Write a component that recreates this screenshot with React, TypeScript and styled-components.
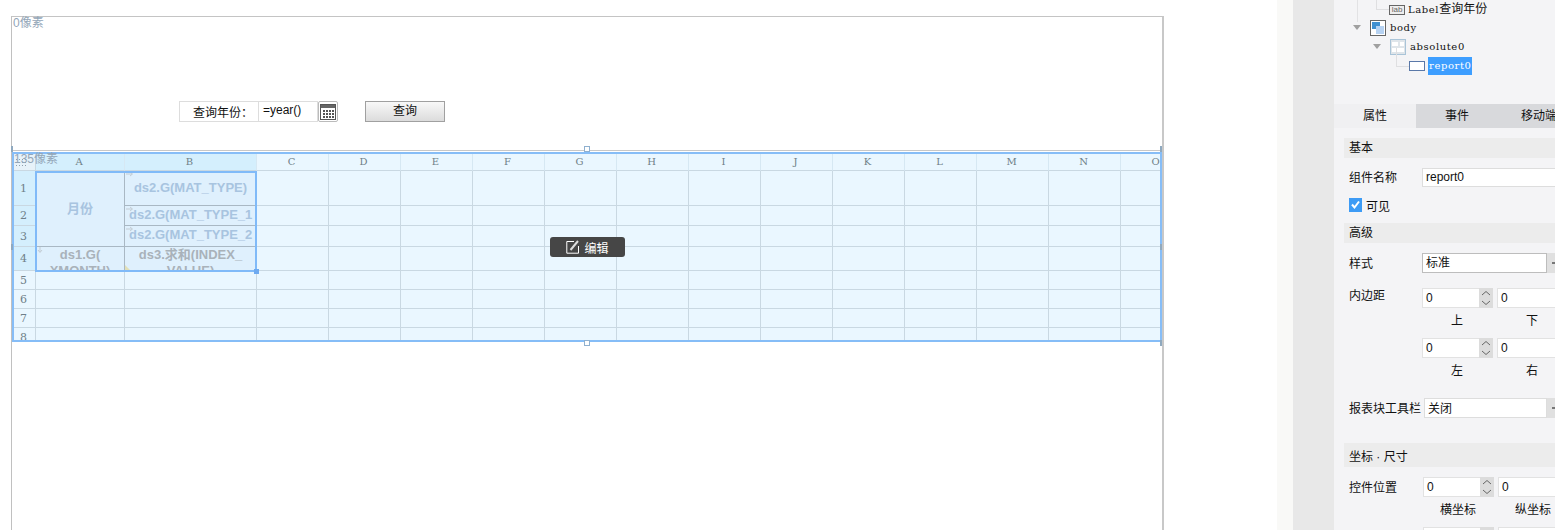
import React from "react";
import styled, { createGlobalStyle } from "styled-components";

const columns = ["C", "D", "E", "F", "G", "H", "I", "J", "K", "L", "M", "N", "O"];

function CalendarIcon() {
  return (
    <svg width="16" height="16" viewBox="0 0 16 16">
      <rect x="0.5" y="0.5" width="15" height="15" fill="#fff" stroke="#555" />
      <rect x="1" y="1" width="14" height="3" fill="#666" />
      {[6, 9, 12].map((y) =>
        [3, 6, 9, 12].map((x) => <rect key={`${x}-${y}`} x={x} y={y} width="2" height="2" fill="#555" />)
      )}
    </svg>
  );
}

function EditIcon() {
  return (
    <svg width="14" height="14" viewBox="0 0 14 14">
      <path d="M8 1.5H.8v11.7h11.7V6" fill="none" stroke="#fff" />
      <path d="M4.5 10 12 1" fill="none" stroke="#ddd" strokeWidth="2" />
    </svg>
  );
}

function Check() {
  return (
    <svg width="13" height="13" viewBox="0 0 13 13">
      <path d="M3 6.5 5.5 9.5 10 3.5" fill="none" stroke="#fff" strokeWidth="2" />
    </svg>
  );
}

function Marker({ down }: { down?: boolean }) {
  return (
    <MarkerBox width="8" height="6" viewBox="0 0 8 6">
      <path
        d={down ? "M3 0V5M1 3 3 5.5 5 3" : "M0 3H6M4 1 6.5 3 4 5"}
        fill="none"
        stroke="#c3ccd4"
      />
    </MarkerBox>
  );
}

function Spin({ value }: { value: string }) {
  return (
    <SpinField>
      <SpinValue>{value}</SpinValue>
      <SpinButtons>
        <svg width="10" height="16" viewBox="0 0 10 16">
          <path d="M1 5 5 1.5 9 5M1 11 5 14.5 9 11" fill="none" stroke="#666" />
        </svg>
      </SpinButtons>
    </SpinField>
  );
}

function Plain({ value }: { value: string }) {
  return <PlainField>{value}</PlainField>;
}

function Pad({ left, right, a, b }: { left: string; right: string; a: React.ReactNode; b: React.ReactNode }) {
  return (
    <>
      <FieldPair>
        {a}
        {b}
      </FieldPair>
      <CaptionPair>
        <span>{left}</span>
        <span>{right}</span>
      </CaptionPair>
    </>
  );
}

function Tree() {
  return (
    <TreeBox>
      <TreeRow $indent={55} $line $guide>
        <LabIcon>lab</LabIcon>
        <TreeText $tight>
          Label<TreeCjk>查询年份</TreeCjk>
        </TreeText>
      </TreeRow>
      <TreeRow $indent={19}>
        <Arrow />
        <svg width="16" height="16" viewBox="0 0 16 16">
          <rect x="0.5" y="0.5" width="15" height="15" fill="#fff" stroke="#666" />
          <rect x="2" y="2" width="8" height="7" fill="#3f8fd0" />
          <rect x="6" y="6" width="8" height="8" fill="#b6d2f2" />
        </svg>
        <TreeText>body</TreeText>
      </TreeRow>
      <TreeRow $indent={39}>
        <Arrow />
        <svg width="16" height="16" viewBox="0 0 16 16">
          <rect x="0.5" y="0.5" width="15" height="15" fill="#dfe5ea" stroke="#a9c4d8" />
          <rect x="2" y="3" width="6" height="4" fill="#fff" />
          <rect x="10" y="3" width="4" height="4" fill="#fff" />
          <rect x="2" y="9" width="12" height="4" fill="#fff" />
        </svg>
        <TreeText>absolute0</TreeText>
      </TreeRow>
      <TreeRow $indent={75} $line>
        <ReportIcon />
        <TreeText $selected $tight>
          report0
        </TreeText>
      </TreeRow>
    </TreeBox>
  );
}

function Sheet() {
  return (
    <SheetGrid>
      <Corner />
      <ColHead $active>A</ColHead>
      <ColHead $active>B</ColHead>
      {columns.map((c) => (
        <ColHead key={c}>{c}</ColHead>
      ))}

      <RowHead $active>1</RowHead>
      <MergedCell>月份</MergedCell>
      <DataCell $active $tall>
        <Marker />
        ds2.G(MAT_TYPE)
      </DataCell>
      {columns.map((c) => (
        <Cell key={c} />
      ))}

      <RowHead $active>2</RowHead>
      <DataCell $active $align="left">
        <Marker />
        ds2.G(MAT_TYPE_1
      </DataCell>
      {columns.map((c) => (
        <Cell key={c} />
      ))}

      <RowHead $active>3</RowHead>
      <DataCell $active $align="left">
        <Marker />
        ds2.G(MAT_TYPE_2
      </DataCell>
      {columns.map((c) => (
        <Cell key={c} />
      ))}

      <RowHead $active>4</RowHead>
      <DataCell $wrap>
        <Marker down />
        ds1.G(
        <br />
        XMONTH)
      </DataCell>
      <DataCell $wrap>
        ds3.求和(INDEX_
        <br />
        VALUE)
        <Corned />
      </DataCell>
      {columns.map((c) => (
        <Cell key={c} />
      ))}

      {["5", "6", "7", "8"].map((r) => (
        <React.Fragment key={r}>
          <RowHead>{r}</RowHead>
          <Cell />
          <Cell />
          {columns.map((c) => (
            <Cell key={c} />
          ))}
        </React.Fragment>
      ))}
    </SheetGrid>
  );
}

export default function App() {
  return (
    <Page>
      <GlobalStyle />
      <Workspace>
        <Frame>
          <Ruler $left={1} $top={0}>
            0像素
          </Ruler>
          <QueryBand>
            <QueryLabel>查询年份：</QueryLabel>
            <QueryInput>=year()</QueryInput>
            <CalendarButton>
              <CalendarIcon />
            </CalendarButton>
            <QueryButton>查询</QueryButton>
          </QueryBand>
          <Report>
            <Ruler $left={0} $top={-1}>
              135像素
            </Ruler>
            <Grip />
            <Sheet />
            <Selection>
              <SelectionHandle />
            </Selection>
            <EditBadge>
              <EditIcon />
              编辑
            </EditBadge>
            <Handle $x="calc(50% - 3px)" $y="-8px" />
            <Handle $x="calc(50% - 3px)" $y="calc(100% + 0px)" />
            <SideTick $x="-3px" $y="calc(50% - 3px)" />
            <SideTick $x="calc(100% + 0px)" $y="calc(50% - 3px)" />
            <SideTick $x="-3px" $y="-8px" />
            <SideTick $x="calc(100% + 0px)" $y="-8px" />
            <SideTick $x="calc(100% + 0px)" $y="calc(100% + 0px)" />
          </Report>
        </Frame>
      </Workspace>
      <Gutter />
      <Rail />
      <Panel>
        <Tree />
        <Tabs>
          <Tab $active>属性</Tab>
          <Tab>事件</Tab>
          <Tab>移动端</Tab>
        </Tabs>
        <PanelBody>
          <SectionTitle $height={20}>基本</SectionTitle>
          <FormRow $top={10}>
            <FieldLabel>组件名称</FieldLabel>
            <TextField>report0</TextField>
          </FormRow>
          <CheckRow>
            <CheckBox>
              <Check />
            </CheckBox>
            可见
          </CheckRow>
          <SectionTitle $height={20} $top={11}>
            高级
          </SectionTitle>
          <FormRow $top={10}>
            <FieldLabel $shift={1}>样式</FieldLabel>
            <SelectField $dark>标准</SelectField>
            <SelectCaret />
          </FormRow>
          <FormRow $top={15} $align="flex-start">
            <FieldLabel $shift={-1}>内边距</FieldLabel>
            <PadColumn>
              <Pad left="上" right="下" a={<Spin value="0" />} b={<Plain value="0" />} />
              <Pad left="左" right="右" a={<Spin value="0" />} b={<Plain value="0" />} />
            </PadColumn>
          </FormRow>
          <FormRow $top={10}>
            <FieldLabel $narrow $shift={1}>
              报表块工具栏
            </FieldLabel>
            <SelectField>关闭</SelectField>
            <SelectCaret />
          </FormRow>
          <SectionTitle $height={24} $top={25}>
            坐标 · 尺寸
          </SectionTitle>
          <FormRow $top={10} $align="flex-start">
            <FieldLabel $wide $shift={2}>
              控件位置
            </FieldLabel>
            <PadColumn>
              <Pad left="横坐标" right="纵坐标" a={<Spin value="0" />} b={<Plain value="0" />} />
              <FieldPair>
                <Spin value="" />
                <Plain value="" />
              </FieldPair>
            </PadColumn>
          </FormRow>
        </PanelBody>
      </Panel>
    </Page>
  );
}

const GlobalStyle = createGlobalStyle`
  html, body {
    margin: 0;
    background: #fff;
    overflow: hidden;
  }
  * {
    box-sizing: border-box;
  }
`;

const cjk = `"Liberation Sans", "Noto Sans CJK SC", sans-serif`;
const slab = `"DejaVu Serif", "Noto Sans CJK SC", serif`;

const Page = styled.div`
  display: grid;
  grid-template-columns: 1277px 16px 41px 221px;
  width: 1555px;
  height: 530px;
  overflow: hidden;
  font-family: ${cjk};
  font-size: 12px;
  color: #111;
`;

const Workspace = styled.main`
  padding: 16px 0 0 11px;
  height: 530px;
  overflow: hidden;
`;

const Frame = styled.div`
  position: relative;
  width: 1153px;
  height: 520px;
  border-top: 1px solid #c4c4c4;
  border-left: 1px solid #c0c0c0;
  border-right: 2px solid #c8c8c8;
`;

const Ruler = styled.span<{ $left: number; $top: number }>`
  position: absolute;
  left: ${(p) => p.$left}px;
  top: ${(p) => p.$top}px;
  z-index: 5;
  font-size: 12px;
  line-height: 12px;
  color: #93a6b8;
`;

const QueryBand = styled.div`
  display: flex;
  height: 134px;
  padding: 84px 0 0 167px;
  border-bottom: 1px solid #c8c8c8;
`;

const QueryLabel = styled.div`
  width: 80px;
  height: 21px;
  padding-left: 13px;
  border: 1px solid #ddd;
  font-size: 12px;
  line-height: 22px;
`;

const QueryInput = styled.div`
  width: 60px;
  height: 21px;
  margin-left: -1px;
  padding-left: 4px;
  border: 1px solid #ddd;
  font-size: 12px;
  line-height: 17px;
`;

const CalendarButton = styled.div`
  display: flex;
  align-items: center;
  justify-content: center;
  width: 20px;
  height: 21px;
  border: 1px solid #bbb;
  border-radius: 2px;
`;

const QueryButton = styled.div`
  width: 80px;
  height: 21px;
  margin-left: 27px;
  border: 1px solid #a0a0a0;
  background: linear-gradient(#f8f8f8, #dcdcdc);
  text-align: center;
  font-size: 12px;
  line-height: 19px;
`;

const Report = styled.div`
  position: relative;
  width: 1150px;
  height: 190px;
  margin-top: 1px;
  border: 2px solid #86bdf7;
`;

const Grip = styled.div`
  position: absolute;
  left: 1px;
  top: 4px;
  z-index: 4;
  width: 12px;
  height: 9px;
  background-image: radial-gradient(#8fa0ad 1px, transparent 1px);
  background-size: 3px 3px;
`;

const SheetGrid = styled.div`
  display: grid;
  grid-template-columns: 22px 89px 132px repeat(13, 72px);
  grid-template-rows: 17px 35px 20px 21px 24px 19px 19px 19px 19px;
  width: 1146px;
  height: 186px;
  overflow: hidden;
  background: #eaf7ff;
`;

const Cell = styled.div`
  position: relative;
  border-right: 1px solid #c9d8e2;
  border-bottom: 1px solid #c9d8e2;
`;

const Corner = styled(Cell)`
  background: #e7f2f9;
`;

const ColHead = styled.div<{ $active?: boolean }>`
  padding-right: 2px;
  border-right: 1px solid #d6e8f3;
  border-bottom: 1px solid #c9d8e2;
  background: ${(p) => (p.$active ? "#d4effd" : "#eaf7ff")};
  font-family: ${slab};
  font-size: 10px;
  line-height: 16px;
  text-align: center;
  color: #6f7f88;
`;

const RowHead = styled(Cell)<{ $active?: boolean }>`
  display: flex;
  align-items: center;
  justify-content: center;
  padding-right: 2px;
  background: ${(p) => (p.$active ? "#d4effd" : "#eaf7ff")};
  font-family: ${slab};
  font-size: 11px;
  color: #6f7f88;
`;

const MergedCell = styled(Cell)`
  grid-row: span 3;
  display: flex;
  align-items: center;
  justify-content: center;
  padding-bottom: 3px;
  border-bottom-color: #a9b8c4;
  border-right-color: #a9b8c4;
  background: #dff0fd;
  font-size: 13px;
  font-weight: 700;
  color: #a8c4e0;
`;

const DataCell = styled(Cell)<{ $active?: boolean; $align?: string; $wrap?: boolean; $tall?: boolean }>`
  overflow: hidden;
  padding-left: ${(p) => (p.$align === "left" ? 4 : 0)}px;
  border-bottom-color: #a9b8c4;
  border-right-color: #a9b8c4;
  background: #dff0fd;
  font-size: 13px;
  font-weight: 700;
  line-height: ${(p) => (p.$wrap ? "16px" : p.$tall ? "34px" : "18px")};
  white-space: nowrap;
  text-align: ${(p) => p.$align ?? "center"};
  color: ${(p) => (p.$active ? "#a8c4e0" : "#a9b2ba")};
`;

const MarkerBox = styled.svg`
  position: absolute;
  left: 1px;
  top: 0;
`;

const Corned = styled.span`
  position: absolute;
  left: 0;
  bottom: 0;
  width: 0;
  height: 0;
  border-left: 5px solid #e2e0b8;
  border-top: 5px solid transparent;
`;

const Selection = styled.div`
  position: absolute;
  left: 21px;
  top: 17px;
  width: 222px;
  height: 101px;
  border: 2px solid #80baf8;
  pointer-events: none;
`;

const SelectionHandle = styled.span`
  position: absolute;
  right: -4px;
  bottom: -4px;
  width: 5px;
  height: 5px;
  background: #6eaaf0;
`;

const EditBadge = styled.div`
  position: absolute;
  left: 536px;
  top: 83px;
  display: flex;
  align-items: center;
  justify-content: center;
  gap: 4px;
  width: 75px;
  height: 20px;
  border-radius: 3px;
  background: #464646;
  color: #fff;
  font-size: 12px;
`;

const Handle = styled.span<{ $x: string; $y: string }>`
  position: absolute;
  left: ${(p) => p.$x};
  top: ${(p) => p.$y};
  z-index: 6;
  width: 6px;
  height: 6px;
  border: 1px solid #8fb0cf;
  background: #fff;
`;

const SideTick = styled.span<{ $x: string; $y: string }>`
  position: absolute;
  left: ${(p) => p.$x};
  top: ${(p) => p.$y};
  z-index: 6;
  width: 2px;
  height: 6px;
  background: #8fa9bf;
`;

const Gutter = styled.div`
  background: #f9f9f7;
`;

const Rail = styled.div`
  background: #e8e8e8;
`;

const Panel = styled.aside`
  width: 221px;
  height: 530px;
  overflow: hidden;
  background: #f4f4f6;
`;

const TreeBox = styled.div`
  height: 104px;
  margin-top: -1px;
  margin-bottom: 1px;
`;

const TreeRow = styled.div<{ $indent: number; $line?: boolean; $guide?: boolean }>`
  position: relative;
  display: flex;
  align-items: center;
  gap: 4px;
  height: 19px;
  padding-top: ${(p) => (p.$guide ? 2 : 0)}px;
  padding-left: ${(p) => p.$indent}px;

  &::before {
    content: "";
    display: ${(p) => (p.$line ? "block" : "none")};
    position: absolute;
    left: ${(p) => p.$indent - 13}px;
    top: -8px;
    width: 12px;
    height: 18px;
    border-left: 1px solid #dfdfe1;
    border-bottom: 1px solid #dfdfe1;
  }

  &::after {
    content: "";
    display: ${(p) => (p.$guide ? "block" : "none")};
    position: absolute;
    left: 23px;
    top: 0;
    height: 23px;
    border-left: 1px solid #e2e2e4;
  }
`;

const Arrow = styled.span`
  width: 0;
  height: 0;
  margin-right: 5px;
  border-left: 4px solid transparent;
  border-right: 4px solid transparent;
  border-top: 5px solid #a0a0a0;
`;

const LabIcon = styled.span`
  width: 16px;
  height: 10px;
  border: 1px solid #666;
  background: #eee;
  font-size: 8px;
  line-height: 8px;
  text-align: center;
  color: #666;
`;

const ReportIcon = styled.span`
  width: 16px;
  height: 10px;
  border: 1px solid #5a78a8;
  background: #fff;
`;

const TreeText = styled.span<{ $selected?: boolean; $tight?: boolean }>`
  margin-left: ${(p) => (p.$tight ? -1 : 0)}px;
  padding: 0 ${(p) => (p.$selected ? "1px" : "0")};
  line-height: 18px;
  font-family: ${slab};
  font-size: 10px;
  letter-spacing: 0.6px;
  white-space: nowrap;
  background: ${(p) => (p.$selected ? "#3d9eff" : "transparent")};
  color: ${(p) => (p.$selected ? "#fff" : "#111")};
`;

const TreeCjk = styled.span`
  font-family: ${cjk};
  font-size: 12px;
  letter-spacing: 0;
`;

const Tabs = styled.div`
  display: grid;
  grid-template-columns: repeat(3, 82px);
  height: 24px;
`;

const Tab = styled.div<{ $active?: boolean }>`
  background: ${(p) => (p.$active ? "#f0f0f2" : "#d8d9dc")};
  text-align: center;
  line-height: 24px;
  white-space: nowrap;
`;

const PanelBody = styled.div`
  width: 260px;
  padding: 10px 0 0 10px;
`;

const SectionTitle = styled.div<{ $height: number; $top?: number }>`
  height: ${(p) => p.$height}px;
  margin-top: ${(p) => p.$top ?? 0}px;
  padding-left: 5px;
  padding-top: ${(p) => (p.$height > 20 ? 2 : 0)}px;
  background: #ececec;
  line-height: ${(p) => p.$height}px;
`;

const FormRow = styled.div<{ $top: number; $align?: string }>`
  display: flex;
  align-items: ${(p) => p.$align ?? "center"};
  margin-top: ${(p) => p.$top}px;
  padding-left: 5px;
`;

const FieldLabel = styled.span<{ $narrow?: boolean; $wide?: boolean; $shift?: number }>`
  flex: none;
  width: ${(p) => (p.$narrow ? 75 : p.$wide ? 74 : 73)}px;
  margin-top: ${(p) => p.$shift ?? 0}px;
  line-height: 18px;
  white-space: nowrap;
`;

const TextField = styled.div`
  width: 160px;
  height: 19px;
  padding-left: 3px;
  border: 1px solid #ddd;
  background: #fff;
  line-height: 17px;
`;

const CheckRow = styled.div`
  display: flex;
  align-items: center;
  gap: 4px;
  height: 14px;
  margin-top: 11px;
  padding-left: 5px;
`;

const CheckBox = styled.span`
  display: flex;
  width: 13px;
  height: 14px;
  background: #3d9bf5;
`;

const SelectField = styled.div<{ $dark?: boolean }>`
  width: ${(p) => (p.$dark ? 125 : 123)}px;
  height: 20px;
  padding-left: 3px;
  border: 1px solid ${(p) => (p.$dark ? "#bdbdbd" : "#ddd")};
  background: #fff;
  line-height: ${(p) => (p.$dark ? 19 : 21)}px;
`;

const SelectCaret = styled.span`
  width: 14px;
  height: 20px;
  background: #e0e0e0;
  position: relative;

  &::after {
    content: "";
    position: absolute;
    left: 5px;
    top: 9px;
    width: 4px;
    height: 2px;
    background: #777;
  }
`;

const PadColumn = styled.div`
  display: flex;
  flex-direction: column;
`;

const FieldPair = styled.div`
  display: grid;
  grid-template-columns: 70px 70px;
  gap: 5px;
  height: 20px;
`;

const CaptionPair = styled.div`
  display: grid;
  grid-template-columns: 70px 70px;
  gap: 5px;
  height: 30px;
  padding-top: 5px;
  line-height: 16px;
  text-align: center;
`;

const SpinField = styled.div`
  display: grid;
  grid-template-columns: 56px 14px;
  border: 1px solid #e2e2e2;
  border-right: 0;
  background: #fff;
`;

const SpinValue = styled.span`
  padding-left: 3px;
  line-height: 18px;
`;

const SpinButtons = styled.span`
  display: flex;
  align-items: center;
  justify-content: center;
  margin: -1px 0;
  background: #dcdcdc;
`;

const PlainField = styled.div`
  padding-left: 3px;
  border: 1px solid #e2e2e2;
  background: #fff;
  line-height: 18px;
`;
